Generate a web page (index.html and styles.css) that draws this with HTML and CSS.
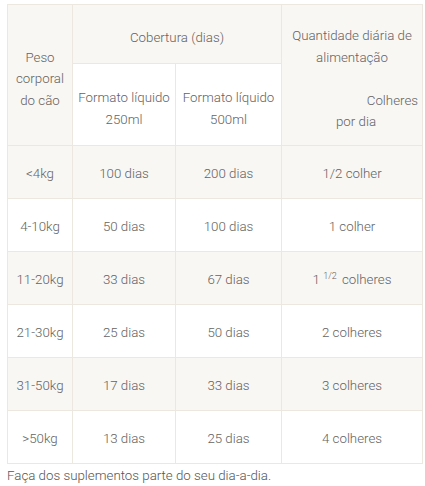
FILE: index.html
```html
<!DOCTYPE html>
<html lang="pt">
<head>
<meta charset="utf-8">
<link rel="stylesheet" href="styles.css">
</head>
<body>
<table class="tbl">
  <colgroup>
    <col class="c1"><col class="c2"><col class="c3"><col class="c4">
  </colgroup>
  <tr class="h1">
    <td rowspan="2" class="beige">Peso<br>corporal<br>do cão</td>
    <td colspan="2" class="beige">Cobertura (dias)</td>
    <td rowspan="2" class="beige qty">
      <div>Quantidade diária de alimentação</div>
      <div class="blank">&nbsp;</div>
      <div class="right">Colheres</div>
      <div class="pordia">por dia</div>
    </td>
  </tr>
  <tr class="h2">
    <td><span class="nw">Formato líquido</span><br>250ml</td>
    <td><span class="nw">Formato líquido</span><br>500ml</td>
  </tr>
  <tr class="row beige"><td>&lt;4kg</td><td>100 dias</td><td>200 dias</td><td>1/2 colher</td></tr>
  <tr class="row"><td>4-10kg</td><td>50 dias</td><td>100 dias</td><td>1 colher</td></tr>
  <tr class="row beige"><td>11-20kg</td><td>33 dias</td><td>67 dias</td><td>1 <sup>1/2</sup> colheres</td></tr>
  <tr class="row"><td>21-30kg</td><td>25 dias</td><td>50 dias</td><td>2 colheres</td></tr>
  <tr class="row beige"><td>31-50kg</td><td>17 dias</td><td>33 dias</td><td>3 colheres</td></tr>
  <tr class="row"><td>&gt;50kg</td><td>13 dias</td><td>25 dias</td><td>4 colheres</td></tr>
</table>
<p class="note">Faça dos suplementos parte do seu dia-a-dia.</p>
</body>
</html>
```
FILE: styles.css
```css
html, body {
  margin: 0;
  background: #ffffff;
}
body {
  padding: 4px 4px 0 7px;
  font-family: Roboto, "Liberation Sans", sans-serif;
  font-weight: 300;
  font-size: 13.3px;
  color: #636363;
}
.tbl {
  border-collapse: collapse;
  width: 415px;
  table-layout: fixed;
  line-height: 21.5px;
}
.c1 { width: 65px; }
.c2 { width: 103px; }
.c3 { width: 106px; }
.c4 { width: 141px; }
.tbl td {
  border: 1px solid #ece8df;
  text-align: center;
  vertical-align: middle;
  padding: 0 4px;
}
.nw { white-space: nowrap; }
.beige, .beige td { background: #f9f7f3; }
.h1 td { height: 50px; padding-top: 8px; }
.h2 td { height: 73px; padding-top: 8px; background: #ffffff; }
.row td { height: 48px; padding-top: 4px; padding-bottom: 0; }
.qty { padding-right: 6px; }
.right { text-align: right; }
.pordia { padding-left: 8px; }
sup {
  font-size: 9px;
  line-height: 0;
  vertical-align: 5px;
  margin: 0 2px 0 0;
}
.note {
  margin: 4px 0 0 0;
  color: #555555;
  line-height: 16px;
}
```
